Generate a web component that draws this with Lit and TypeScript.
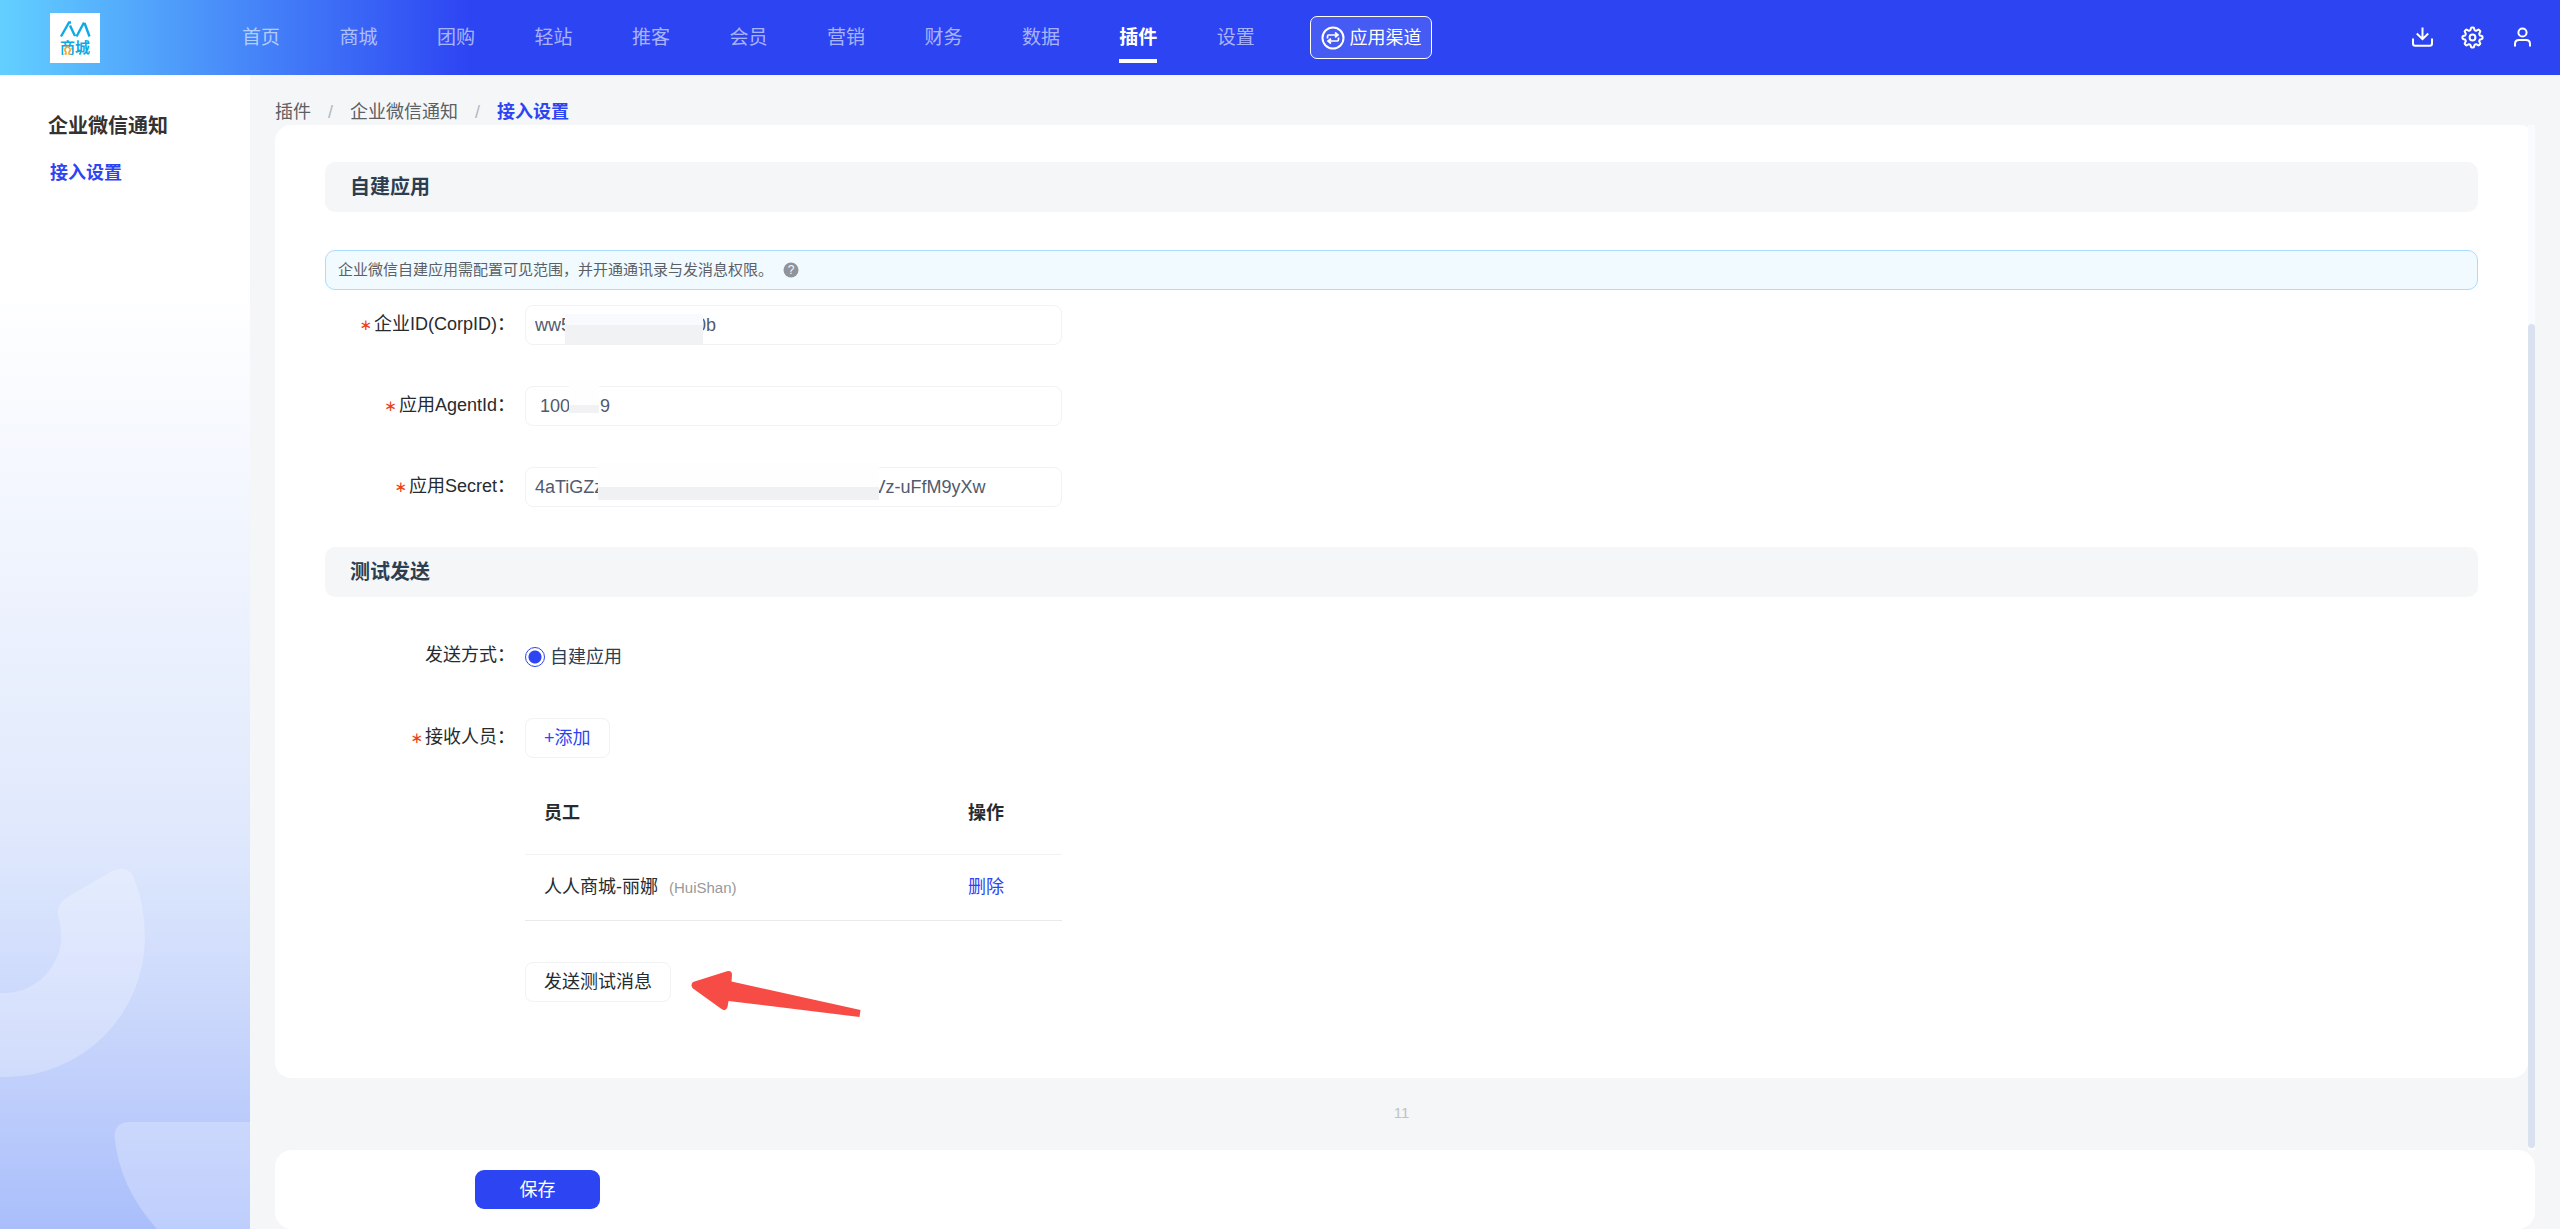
import { LitElement, html, css, svg } from "lit";
import { customElement } from "lit/decorators.js";
import { classMap } from "lit/directives/class-map.js";

const NAV = ["首页", "商城", "团购", "轻站", "推客", "会员", "营销", "财务", "数据", "插件", "设置"];
const ACTIVE_NAV = "插件";

interface TextField {
  id: string;
  label: string;
  value: string;
  kind: string;
}

const FIELDS: TextField[] = [
  { id: "corp", label: "企业ID(CorpID)", value: "ww5" + " ".repeat(25) + "0b", kind: "corp" },
  { id: "agent", label: "应用AgentId", value: "100" + " ".repeat(6) + "9", kind: "agent" },
  { id: "secret", label: "应用Secret", value: "4aTiGZz" + " ".repeat(54) + "Vz-uFfM9yXw", kind: "secret" },
];

const MEMBERS = [{ name: "人人商城-丽娜", account: "(HuiShan)" }];

const gearPath = (() => {
  const parts: string[] = [];
  const teeth = 8;
  const steps = 96;
  for (let i = 0; i < steps; i++) {
    const a = (i / steps) * Math.PI * 2;
    const wave = Math.cos(a * teeth);
    const r = 8.8 + 1.3 * Math.tanh(wave * 2.2);
    const x = 12.5 + r * Math.sin(a);
    const y = 12.5 - r * Math.cos(a);
    parts.push(`${i ? "L" : "M"}${x.toFixed(2)} ${y.toFixed(2)}`);
  }
  return parts.join(" ") + "Z";
})();

const downloadIcon = svg`<path d="M12.5 2.5V14M6.8 8.5L12.5 14.2L18.2 8.5M3 13.5V18.5Q3 20.7 5.2 20.7H19.8Q22 20.7 22 18.5V13.5" />`;
const gearIcon = svg`<path d=${gearPath} /><circle cx="12.5" cy="12.5" r="2.9" />`;
const userIcon = svg`<circle cx="12.5" cy="7.5" r="4.1" /><path d="M5 21.5V19Q5 15.1 9 15.1H16Q20 15.1 20 19V21.5" />`;

@customElement("app-root")
export class AppRoot extends LitElement {
  static styles = css`
    :host {
      display: flex;
      flex-direction: column;
      min-height: 100vh;
      background: #f4f6f8;
      color: #262b30;
      font-family: "Liberation Sans", "Noto Sans CJK SC", sans-serif;
      font-size: 18px;
      line-height: 24px;
    }
    * {
      box-sizing: border-box;
    }
    a {
      color: inherit;
      text-decoration: none;
    }
    button,
    input {
      font: inherit;
      margin: 0;
    }
    h1,
    h2,
    p {
      margin: 0;
    }
    .header {
      display: flex;
      align-items: center;
      height: 75px;
      padding: 0 25px 0 50px;
      background: linear-gradient(90deg, #62d0ff 0, #2d44f3 470px);
    }
    .logo {
      display: block;
      width: 50px;
      height: 50px;
      margin-top: 1px;
    }
    .logo-text {
      font: bold 15px "Noto Sans CJK SC", sans-serif;
      fill: #0fa9e6;
    }
    .nav {
      display: flex;
      justify-content: space-between;
      flex: 0 1 1013px;
      margin-left: 142px;
      font-size: 19px;
      line-height: 30px;
      color: rgba(255, 255, 255, 0.6);
    }
    .nav-item {
      padding: 11px 0 6px;
      border-bottom: 4px solid transparent;
    }
    .nav-item.active {
      color: #fff;
      font-weight: bold;
      border-color: #fff;
    }
    .channel {
      display: flex;
      align-items: center;
      justify-content: center;
      gap: 5px;
      width: 122px;
      height: 43px;
      margin-left: 55px;
      padding: 0;
      border: 1px solid #fff;
      border-radius: 7px;
      background: rgba(255, 255, 255, 0.12);
      color: #fff;
      white-space: nowrap;
    }
    .channel-icon {
      width: 24px;
      height: 24px;
      flex: none;
    }
    .tools {
      display: flex;
      gap: 25px;
      margin-left: auto;
    }
    .tool {
      padding: 0;
      border: 0;
      background: none;
      width: 25px;
      height: 25px;
    }
    .tool-icon {
      display: block;
      width: 25px;
      height: 25px;
      fill: none;
      stroke: #fff;
      stroke-width: 2;
    }
    .body {
      display: flex;
      flex: 1;
    }
    .side {
      position: relative;
      flex: none;
      width: 250px;
      padding: 36px 25px 0 48px;
      background: linear-gradient(180deg, #fff 0, #fff 18%, #e0e9fc 65%, #d2defc 76%, #c1d0fb 87%, #a9befb 100%);
    }
    .side-title {
      font-size: 20px;
      line-height: 30px;
      color: #333;
      white-space: nowrap;
    }
    .side-link {
      display: block;
      margin: 20px 2px 0;
      color: #2d44f3;
      font-weight: bold;
    }
    .side-art {
      position: absolute;
      left: 0;
      bottom: 0;
      width: 250px;
      height: 400px;
      fill: rgba(255, 255, 255, 0.25);
    }
    .main {
      display: flex;
      flex-direction: column;
      flex: 1;
      min-width: 0;
      padding: 0 25px;
    }
    .crumbs {
      display: flex;
      gap: 17px;
      height: 50px;
      padding-top: 25px;
      color: #5c5f64;
    }
    .crumb-sep {
      color: #b5b8bd;
    }
    .crumb-current {
      color: #2d44f3;
      font-weight: bold;
    }
    .scroll {
      display: flex;
      flex: 1;
    }
    .content {
      display: flex;
      flex-direction: column;
      flex: 1;
      min-width: 0;
    }
    .card {
      flex: 1;
      padding: 37px 50px 75px;
      border-radius: 16px 9px 16px 16px / 16px 3px 16px 16px;
      background: #fff;
    }
    .page-note {
      height: 72px;
      padding-top: 23px;
      text-align: center;
      font-size: 15px;
      color: #c0c2c5;
    }
    .gutter {
      display: flex;
      width: 7px;
      padding: 199px 0 2px;
      background: #fafbfe;
    }
    .thumb {
      flex: 1;
      border-radius: 4px;
      background: #d9e1ee;
    }
    .section {
      height: 50px;
      padding: 0 25px;
      border-radius: 10px;
      background: #f4f6f8;
      color: #2c3e50;
      font-size: 20px;
      line-height: 50px;
    }
    .notice {
      display: flex;
      align-items: center;
      gap: 10px;
      height: 40px;
      margin: 38px 0 15px;
      padding: 0 12px;
      border: 1px solid #abdcff;
      border-radius: 10px;
      background: #f0faff;
      color: #5c6066;
      font-size: 15px;
    }
    .help {
      width: 16px;
      height: 16px;
    }
    .help-text {
      font: 12px "Liberation Sans", sans-serif;
      fill: #f0faff;
      text-anchor: middle;
    }
    .rows {
      display: flex;
      flex-direction: column;
      gap: 41px;
      margin-bottom: 40px;
    }
    .rows.test {
      margin: 39px 0 0;
    }
    .row {
      display: flex;
    }
    .label {
      flex: none;
      width: 200px;
      padding-right: 10px;
      text-align: right;
      line-height: 38px;
      white-space: nowrap;
    }
    .required::before {
      content: "∗";
      margin-right: 2px;
      color: #ed4014;
      font-family: "DejaVu Sans", sans-serif;
      font-size: 15px;
      line-height: 1;
    }
    .field {
      position: relative;
      flex: 0 1 537px;
      min-width: 0;
    }
    .input {
      display: block;
      width: 100%;
      height: 40px;
      padding: 0 9px;
      border: 1px solid #f1f2f3;
      border-radius: 8px;
      background: #fff;
      color: #515a6e;
    }
    .input.agent {
      padding-left: 14px;
    }
    .mask {
      position: absolute;
    }
    .mask.corp {
      left: 40px;
      top: 9px;
      width: 138px;
      height: 31px;
      background: linear-gradient(180deg, #f8fafd 0 11px, #f1f2f3 11px);
    }
    .mask.agent {
      left: 44px;
      top: -8px;
      width: 30px;
      height: 35px;
      background: linear-gradient(180deg, #fefefe 0 27px, #f1f2f4 27px);
    }
    .mask.secret {
      left: 73px;
      top: -5px;
      width: 281px;
      height: 38px;
      background: linear-gradient(180deg, #fefefe 0 25px, #f0f1f3 25px);
    }
    .radio-label {
      display: flex;
      align-items: center;
      gap: 5px;
      height: 41px;
      color: #2c3e50;
    }
    .radio {
      appearance: none;
      width: 20px;
      height: 20px;
      border: 1px solid #2d44f3;
      border-radius: 50%;
      background: radial-gradient(circle, #2d44f3 0 6px, #fff 7px);
    }
    .button {
      display: block;
      height: 40px;
      padding: 0 18px;
      border: 1px solid #f1f2f3;
      border-radius: 8px;
      background: #fff;
      color: #262b30;
      white-space: nowrap;
    }
    .button.add {
      color: #2d44f3;
    }
    .members {
      width: 100%;
      margin-top: 12px;
      border-collapse: collapse;
      table-layout: fixed;
      text-align: left;
    }
    .cell {
      padding: 0 19px;
      border-bottom: 1px solid #e8e9eb;
      height: 66px;
    }
    .cell.head {
      height: 84px;
      padding-top: 3px;
      border-color: #f1f2f3;
    }
    .cell.action {
      width: 113px;
    }
    .account {
      margin-left: 6px;
      color: #999;
      font-size: 15px;
    }
    .delete {
      padding: 0;
      border: 0;
      background: none;
      color: #2d44f3;
    }
    .send-wrap {
      position: relative;
    }
    .arrow {
      position: absolute;
      left: 165px;
      top: 8px;
      width: 171px;
      height: 48px;
      fill: #f74b46;
    }
    .save-bar {
      display: flex;
      align-items: center;
      height: 79px;
      padding-left: 200px;
      border-radius: 17px;
      background: #fff;
    }
    .save {
      width: 125px;
      height: 39px;
      padding: 0;
      border: 0;
      border-radius: 9px;
      background: #2d44f3;
      color: #fff;
    }
  `;

  private renderTool(title: string, icon: unknown) {
    return html`<button class="tool" type="button" aria-label=${title}>
      <svg class="tool-icon" viewBox="0 0 25 25">${icon}</svg>
    </button>`;
  }

  private renderHeader() {
    return html`<header class="header">
      <svg class="logo" viewBox="0 0 50 50" aria-hidden="true">
        <rect width="50" height="50" fill="#fff" />
        <path
          d="M11 23.5L19 9.5H21M20 12.5L25 23M26.5 23.5L34 9.5M34.5 10L39.5 23.5"
          fill="none"
          stroke="#0fa9e6"
          stroke-width="2.4"
        />
        <text class="logo-text" x="10" y="40">商城</text>
        <rect x="13.5" y="34" width="8" height="7" fill="#fff" />
        <path
          d="M14.5 41H16V39Q14.2 37.5 15 35.8L17.5 33.5L20 35.8Q20.8 37.5 19 39V41H20.5"
          fill="none"
          stroke="#f5a11d"
          stroke-width="1.5"
        />
      </svg>
      <nav class="nav">
        ${NAV.map(
          (item) => html`<a href="#" class=${classMap({ "nav-item": true, active: item === ACTIVE_NAV })}>${item}</a>`,
        )}
      </nav>
      <button class="channel" type="button">
        <svg class="channel-icon" viewBox="0 0 24 24" fill="none" stroke="#fff">
          <circle cx="12" cy="12" r="10.5" stroke-width="2" />
          <path
            d="M6.5 12.5V10.2Q6.5 9 7.7 9H16.5M14 6.5L17 9L14 11.2M17.5 11.5V13.8Q17.5 15 16.3 15H7.5M10 12.8L7 15L10 17.5"
            stroke-width="1.7"
          />
        </svg>
        应用渠道
      </button>
      <div class="tools">
        ${this.renderTool("下载", downloadIcon)} ${this.renderTool("设置", gearIcon)}
        ${this.renderTool("账号", userIcon)}
      </div>
    </header>`;
  }

  private renderSide() {
    return html`<aside class="side">
      <h1 class="side-title">企业微信通知</h1>
      <a class="side-link" href="#">接入设置</a>
      <svg class="side-art" viewBox="0 0 250 400" aria-hidden="true">
        <path
          d="M0 248H6A140 140 0 0 0 145 108Q145 76 133 47Q127 35 112 42L66 69Q57 76 58 86Q61 96 61 107A57 57 0 0 1 4 164H0Z"
        />
        <path d="M250 293H128Q115 294 114.5 307Q119 358 157 400H250Z" />
      </svg>
    </aside>`;
  }

  private renderField(f: TextField) {
    return html`<div class="row">
      <label class="label required" for=${f.id}>${f.label}：</label>
      <div class="field">
        <input class="input ${f.kind}" id=${f.id} type="text" .value=${f.value} />
        <span class="mask ${f.kind}"></span>
      </div>
    </div>`;
  }

  private renderTest() {
    return html`<div class="rows test">
      <div class="row">
        <span class="label">发送方式：</span>
        <label class="radio-label"><input class="radio" type="radio" name="way" checked />自建应用</label>
      </div>
      <div class="row">
        <span class="label required">接收人员：</span>
        <div class="field">
          <button class="button add" type="button">+添加</button>
          <table class="members">
            <thead>
              <tr>
                <th class="cell head">员工</th>
                <th class="cell head action">操作</th>
              </tr>
            </thead>
            <tbody>
              ${MEMBERS.map(
                (m) => html`<tr>
                  <td class="cell">${m.name} <span class="account">${m.account}</span></td>
                  <td class="cell action"><button class="delete" type="button">删除</button></td>
                </tr>`,
              )}
            </tbody>
          </table>
        </div>
      </div>
      <div class="row">
        <span class="label"></span>
        <div class="send-wrap">
          <button class="button" type="button">发送测试消息</button>
          <svg class="arrow" viewBox="0 0 171 48" aria-hidden="true">
            <path
              d="M3 12L37 1.2Q42 0 42 5L41.5 11.5L170.5 40L169.5 47L38.5 31L37.5 37Q36 42 31.5 39L3 18.5Q0 15 3 12Z"
            />
          </svg>
        </div>
      </div>
    </div>`;
  }

  render() {
    return html`${this.renderHeader()}
      <div class="body">
        ${this.renderSide()}
        <main class="main">
          <nav class="crumbs">
            <a href="#">插件</a><span class="crumb-sep">/</span><a href="#">企业微信通知</a
            ><span class="crumb-sep">/</span><span class="crumb-current">接入设置</span>
          </nav>
          <div class="scroll">
            <div class="content">
              <section class="card">
                <h2 class="section">自建应用</h2>
                <div class="notice">
                  <span>企业微信自建应用需配置可见范围，并开通通讯录与发消息权限。</span>
                  <svg class="help" viewBox="0 0 16 16">
                    <circle cx="8" cy="8" r="7.5" fill="#909399" />
                    <text class="help-text" x="8" y="12">?</text>
                  </svg>
                </div>
                <div class="rows">${FIELDS.map((f) => this.renderField(f))}</div>
                <h2 class="section">测试发送</h2>
                ${this.renderTest()}
              </section>
              <p class="page-note">11</p>
            </div>
            <div class="gutter"><div class="thumb"></div></div>
          </div>
          <footer class="save-bar"><button class="save" type="button">保存</button></footer>
        </main>
      </div>`;
  }
}
